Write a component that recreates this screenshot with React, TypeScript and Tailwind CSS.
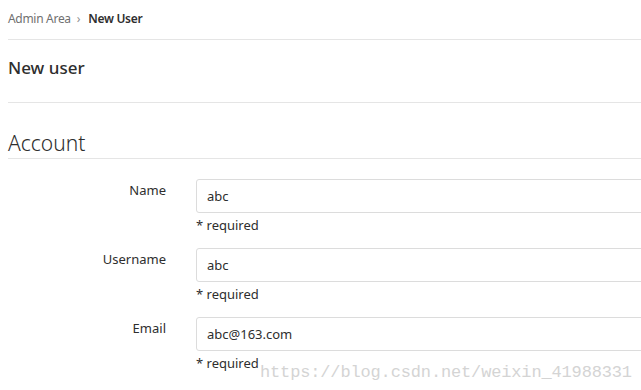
import React from "react";

const fields = [
  { label: "Name", value: "abc" },
  { label: "Username", value: "abc" },
  { label: "Email", value: "abc@163.com" },
];

function Field({ label, value }: { label: string; value: string }) {
  return (
    <div className="flex mb-[14px]">
      <label className="w-[158px] shrink-0 pt-[2px] text-right text-[13px] leading-[18px] text-[#2e2e2e]">
        {label}
      </label>
      <div className="ml-[30px] shrink-0">
        <input
          readOnly
          value={value}
          className="h-[34px] w-[500px] rounded-[3px] border border-[#dcdcdc] bg-white px-[10px] text-[13px] text-[#2e2e2e] outline-none"
        />
        <div className="mt-[3px] text-[13px] leading-[18px] text-[#2e2e2e]">* required</div>
      </div>
    </div>
  );
}

export default function App() {
  return (
    <div
      className="relative h-[390px] w-[641px] overflow-hidden bg-white pl-2"
      style={{ fontFamily: '"Noto Sans", "Open Sans", sans-serif' }}
    >
      <div className="flex h-[40px] items-center border-b border-[#e5e5e5] pb-[2px] text-[12px] tracking-[-0.3px]">
        <span className="text-[#707070]">Admin Area</span>
        <span className="ml-[6px] mr-[8px] text-[#909090]">›</span>
        <span className="font-semibold text-[#2e2e2e]">New User</span>
      </div>
      <div className="flex h-[63px] items-center border-b border-[#e5e5e5] pb-[6px]">
        <h3 className="text-[17px] font-medium text-[#2e2e2e]">New user</h3>
      </div>
      <div className="flex h-[56px] items-end border-b border-[#e5e5e5]">
        <h4 className="text-[21px] font-light leading-[30px] text-[#2e2e2e]">Account</h4>
      </div>
      <div className="pt-[20px]">
        {fields.map((f) => (
          <Field key={f.label} label={f.label} value={f.value} />
        ))}
      </div>
      <div
        className="absolute left-[260px] top-[360px] text-[17px] tracking-[-0.15px] text-[#d4d4d4]"
        style={{ fontFamily: '"Liberation Mono", monospace' }}
      >
        https://blog.csdn.net/weixin_41988331
      </div>
    </div>
  );
}
